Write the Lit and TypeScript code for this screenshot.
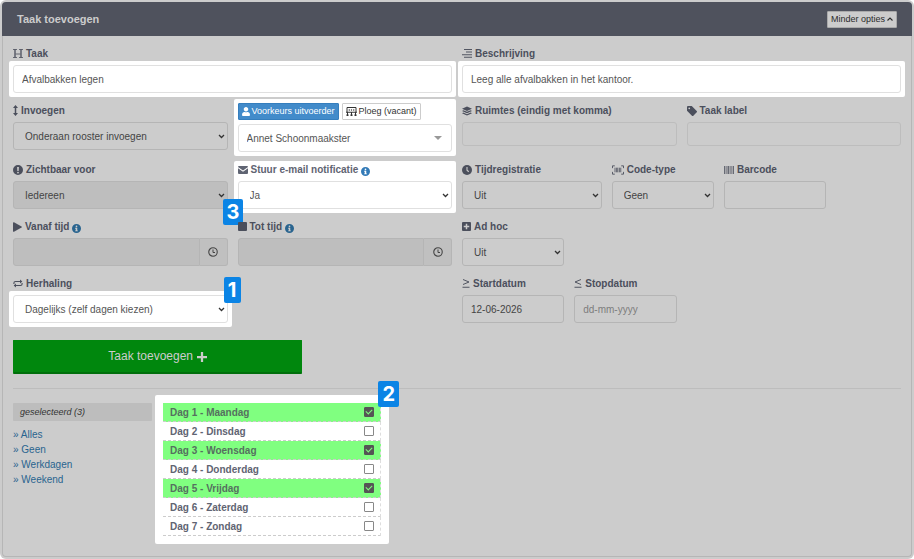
import { LitElement, html, css, svg, nothing } from "lit";
import type { TemplateResult } from "lit";
import { customElement, state } from "lit/decorators.js";
import { classMap } from "lit/directives/class-map.js";

interface Glyph {
  w: number;
  h: number;
  box: string;
  art: TemplateResult;
}

const glyph = (w: number, h: number, box: string, art: TemplateResult): Glyph => ({ w, h, box, art });

const glyphs: Record<string, Glyph> = {
  heading: glyph(10, 9, "0 0 20 18", svg`<path d="M0 1h8M0 17h8M12 1h8M12 17h8M5 10h10" fill="none" stroke="currentColor" stroke-width="1.600"/><path d="M4 1v16M16 1v16" stroke="currentColor" stroke-width="2.600"/>`),
  indent: glyph(10, 9, "0 0 20 18", svg`<path d="M4 1h16M8 6h12M0 11.500h20M4 16.500h16" fill="none" stroke="currentColor" stroke-width="1.900"/>`),
  updown: glyph(5, 11, "0 0 10 22", svg`<path d="M5 0l5 6H6.500v10H10l-5 6-5-6h3.500V6H0z" fill="currentColor"/>`),
  alert: glyph(10, 10, "0 0 20 20", svg`<path fill-rule="evenodd" fill="currentColor" d="M10 0a10 10 0 1 1 0 20 10 10 0 0 1 0-20zM8.200 4l.5 8h2.600l.5-8zM10 13.300a1.800 1.800 0 1 0 0 3.600 1.800 1.800 0 0 0 0-3.600z"/>`),
  info: glyph(9, 9, "0 0 20 20", svg`<path fill-rule="evenodd" fill="currentColor" d="M10 0a10 10 0 1 1 0 20 10 10 0 0 1 0-20zM10 3.300a1.900 1.900 0 1 0 0 3.800 1.900 1.900 0 0 0 0-3.800zM7 8.500v2h1.300v3.700H7v2h6v-2h-1.300V8.500z"/>`),
  envelope: glyph(10, 8, "0 0 20 16", svg`<path fill="currentColor" d="M2 0h16a2 2 0 0 1 2 2L10 9 0 2a2 2 0 0 1 2-2zM0 4.500l10 7 10-7V14a2 2 0 0 1-2 2H2a2 2 0 0 1-2-2z"/>`),
  clock: glyph(10, 10, "0 0 20 20", svg`<circle cx="10" cy="10" r="10" fill="currentColor"/><path d="M10 4v6.500l3.500 3" fill="none" stroke="#ccc" stroke-width="2.200"/>`),
  clockline: glyph(10, 10, "0 0 20 20", svg`<circle cx="10" cy="10" r="8.500" fill="none" stroke="currentColor" stroke-width="2.200"/><path d="M10 5v6h4" fill="none" stroke="currentColor" stroke-width="2"/>`),
  layers: glyph(10, 10, "0 0 22 20" , svg`<path fill="currentColor" d="M11 0l11 5-11 5L0 5zM3 8.200l8 3.700 8-3.700 3 1.600-11 5-11-5zM3 13.200l8 3.700 8-3.700 3 1.600-11 5-11-5z"/>`),
  tag: glyph(10, 10, "0 0 20 20", svg`<path fill-rule="evenodd" fill="currentColor" d="M0 9.500V2a2 2 0 0 1 2-2h7.500L19.400 9.900a2 2 0 0 1 0 2.800l-6.700 6.700a2 2 0 0 1-2.800 0zM4.500 2.800a1.700 1.700 0 1 0 0 3.500 1.700 1.700 0 0 0 0-3.500z"/>`),
  scan: glyph(12, 10, "0 0 26 20", svg`<path d="M6 1H1v5M20 1h5v5M6 19H1v-5M20 19h5v-5" fill="none" stroke="currentColor" stroke-width="2"/><path d="M6.500 5v10M10 5v10M12.500 5v10M16 5v10M19 5v10" stroke="currentColor" stroke-width="1.800"/>`),
  barcode: glyph(10, 8, "0 0 20 16", svg`<path d="M1 0v16M6 0v16M9 0v16M14 0v16M19 0v16" stroke="currentColor" stroke-width="1.600"/><path d="M3.500 0v16M11.500 0v16M16.500 0v16" stroke="currentColor" stroke-width=".8"/>`),
  play: glyph(9, 10, "0 0 18 20", svg`<path d="M0 1.500v17c0 1 1 1.500 2 1l15-8.400c1-.6 1-1.600 0-2.200L2 .5C1 0 0 .5 0 1.500z" fill="currentColor"/>`),
  stop: glyph(9, 9, "0 0 18 18", svg`<rect width="18" height="18" rx="2" fill="currentColor"/>`),
  plusbox: glyph(9, 9, "0 0 18 18", svg`<path fill-rule="evenodd" fill="currentColor" d="M2 0h14a2 2 0 0 1 2 2v14a2 2 0 0 1-2 2H2a2 2 0 0 1-2-2V2a2 2 0 0 1 2-2zM7.500 3.500v4h-4v3h4v4h3v-4h4v-3h-4v-4z"/>`),
  repeat: glyph(10, 9, "0 0 22 18", svg`<path d="M2 10V8a3.500 3.500 0 0 1 3.500-3.500H17M20 8v2a3.500 3.500 0 0 1-3.500 3.500H5" fill="none" stroke="currentColor" stroke-width="2.400"/><path d="M15.500 0v9l5-4.500zM6.500 9v9l-5-4.500z" fill="currentColor"/>`),
  gte: glyph(8, 9, "0 0 16 18", svg`<path d="M2 1l12 5-12 5M1 16.500h14" fill="none" stroke="currentColor" stroke-width="1.900"/>`),
  lte: glyph(8, 9, "0 0 16 18", svg`<path d="M14 1L2 6l12 5M1 16.500h14" fill="none" stroke="currentColor" stroke-width="1.900"/>`),
  user: glyph(8, 9, "0 0 448 512", svg`<path fill="currentColor" d="M224 256c70.700 0 128-57.300 128-128S294.700 0 224 0 96 57.300 96 128s57.300 128 128 128zm89.600 32h-16.700c-22.200 10.200-46.900 16-72.900 16s-50.600-5.800-72.900-16h-16.700C60.200 288 0 348.200 0 422.400V464c0 26.500 21.500 48 48 48h352c26.500 0 48-21.500 48-48v-41.600c0-74.200-60.200-134.400-134.400-134.400z"/>`),
  team: glyph(11, 9, "0 0 22 18", svg`<path d="M2 10V1h18v9M0 10.500h22" fill="none" stroke="currentColor" stroke-width="2"/><circle cx="6.500" cy="6" r="1.400" fill="currentColor"/><circle cx="11" cy="6" r="1.400" fill="currentColor"/><circle cx="15.500" cy="6" r="1.400" fill="currentColor"/><path d="M1 18v-2.500c0-2 4-2 4 0V18zM9 18v-2.500c0-2 4-2 4 0V18zM17 18v-2.500c0-2 4-2 4 0V18z" fill="currentColor"/><path d="M3 10v4M11 10v4M19 10v4" stroke="currentColor" stroke-width="2"/>`),
  plus: glyph(10, 10, "0 0 20 20", svg`<path d="M10 0v20M0 10h20" stroke="currentColor" stroke-width="4.500"/>`),
  chevron: glyph(7, 5, "0 0 14 10", svg`<path d="M2 2l5 5 5-5" fill="none" stroke="currentColor" stroke-width="2.600"/>`),
  up: glyph(6, 4, "0 0 12 8", svg`<path d="M1 7l5-5 5 5" fill="none" stroke="currentColor" stroke-width="2.200"/>`),
  caret: glyph(8, 4, "0 0 8 4", svg`<path d="M0 0h8L4 4z" fill="currentColor"/>`),
};

const icon = (name: string) => {
  const g = glyphs[name];
  return html`<svg class="icon" width=${g.w} height=${g.h} viewBox=${g.box} aria-hidden="true">${g.art}</svg>`;
};

const DAYS = ["Maandag", "Dinsdag", "Woensdag", "Donderdag", "Vrijdag", "Zaterdag", "Zondag"];

@customElement("app-root")
export class AppRoot extends LitElement {
  @state() private selected = new Set<number>([0, 2, 4]);

  static styles = css`
    :host {
      display: block;
      box-sizing: border-box;
      min-height: 100vh;
      padding: 2px;
      border-radius: 6px;
      background: #ccc;
      color: #4b4f5c;
      font: 10px/15px "Liberation Sans", Arial, sans-serif;
    }
    *, *::before, *::after { box-sizing: border-box; }
    .panel {
      border: 1px solid #b6b6b6;
      border-top: 0;
      border-radius: 4px;
      padding-bottom: 20px;
    }
    header {
      display: flex;
      align-items: center;
      justify-content: space-between;
      height: 34px;
      margin: 0 -1px;
      padding: 0 15px;
      border-radius: 4px 4px 0 0;
      background: #4f525d;
    }
    h1 { margin: 0; font-size: 11px; line-height: 15px; color: #ccc; }
    button { font: inherit; cursor: pointer; }
    .small {
      display: inline-flex;
      align-items: center;
      gap: 2px;
      height: 17px;
      padding: 0 3px;
      border: 1px solid #ccc;
      border-radius: 1px;
      background: #fff;
      color: #333;
      font-size: 9px;
      line-height: 15px;
      white-space: nowrap;
    }
    .small.dim { border-color: #aaa; background: #ccc; color: #2b2b2b; }
    .small.on { border-color: #357ebd; background: #428bca; color: #fff; }

    .body { padding: 10px 10px 0; }
    .grid {
      display: grid;
      grid-template-columns: repeat(24, minmax(0, 1fr));
      gap: 10px;
      align-items: start;
    }
    .s12 { grid-column-end: span 12; }
    .s6 { grid-column-end: span 6; }
    .s4 { grid-column-end: span 4; }
    .s3 { grid-column-end: span 3; }
    .left { grid-column-start: 1; }
    .right { grid-column-start: 13; }

    .field { position: relative; display: grid; gap: 4px; isolation: isolate; }
    .caption { display: flex; align-items: center; gap: 3px; height: 15px; font-weight: bold; white-space: nowrap; }
    .info { display: inline-flex; padding: 3px 0 0; border: 0; background: none; color: #29648f; }
    .icon { display: block; flex: none; }

    .control { position: relative; display: grid; }
    input.text, select {
      width: 100%;
      height: 28px;
      margin: 0;
      padding: 0 8px;
      border: 1px solid #b5b5b5;
      border-radius: 3px;
      background: transparent;
      color: #444;
      font: inherit;
      outline: 0;
      appearance: none;
    }
    select { padding-left: 11px; }
    select.person { padding-left: 8px; }
    input.text.low { height: 24px; border-color: #bdbdbd; }
    input::placeholder { color: #7d7d7d; opacity: 1; }
    select:disabled, input.text:disabled { background: #bebebe; opacity: 1; }
    .arrow {
      position: absolute;
      right: 3px;
      top: 0;
      bottom: 0;
      display: flex;
      align-items: center;
      color: #333;
      pointer-events: none;
    }
    .arrow.flat { right: 10px; color: #999; }
    .group { display: flex; }
    .group input.text { flex: 1; min-width: 0; border-radius: 3px 0 0 3px; }
    .group button {
      display: grid;
      place-items: center;
      width: 28px;
      padding: 0;
      border: 1px solid #b5b5b5;
      border-left: 0;
      border-radius: 0 3px 3px 0;
      background: #c0c0c0;
      color: #444;
    }

    .lit .control, .lit-all { isolation: isolate; }
    .lit .control::before, .lit-all::before {
      content: "";
      position: absolute;
      inset: -4px;
      z-index: -1;
      border-radius: 2px;
      background: #fff;
    }
    .lit-all.snug::before { top: -1px; }
    .lit select, .lit input.text, .lit-all select { border-color: #e0e0e0; color: #555; }
    .lit-all { color: #5f6472; }
    .lit-all .info { color: #337ab7; }
    .toggles { display: flex; gap: 3px; }

    .step {
      position: absolute;
      z-index: 2;
      min-width: 17px;
      height: 26px;
      padding: 0 4px;
      border-radius: 2px;
      background: #0b84e5;
      color: #fff;
      font: bold 20px/26px Inter, "Liberation Sans", sans-serif;
      text-align: center;
    }
    .step.first { right: -13px; top: 1px; padding: 0 3px; }
    .step.second { right: -18px; top: -22px; }
    .step.third { left: -15px; bottom: -16px; }

    .submit {
      grid-column: 1 / span 8;
      display: flex;
      align-items: center;
      justify-content: center;
      gap: 4px;
      height: 34px;
      margin-top: 7px;
      border: 1px solid #00870d;
      border-bottom: 2px solid #006f0b;
      border-radius: 1px;
      background: #00870d;
      color: #ccc;
      font-size: 12px;
    }
    hr { margin: 14px 0; border: 0; border-top: 1px solid #bdbdbd; }

    .schedule {
      display: grid;
      grid-template-columns: 139fr 218fr 509fr;
      gap: 11px;
      align-items: start;
    }
    .count {
      margin: 0 0 6px;
      padding: 0 7px;
      border-radius: 1px;
      background: #bdbdbd;
      color: #333;
      font-size: 9px;
      line-height: 18px;
      font-style: italic;
    }
    ul { margin: 0; padding: 0; list-style: none; }
    .links a { color: #29648f; text-decoration: none; }
    .days { position: relative; isolation: isolate; }
    .days::before {
      content: "";
      position: absolute;
      inset: -8px;
      z-index: -1;
      border-radius: 2px;
      background: #fff;
    }
    .day {
      display: flex;
      align-items: center;
      justify-content: space-between;
      height: 19px;
      padding: 0 6px 0 7px;
      border-right: 1px dashed #ddd;
      border-bottom: 1px dashed #ccc;
      color: #5f6472;
      font-weight: bold;
    }
    .day.on { background: #80ff80; color: #55705f; }
    .day label { flex: 1; }
    .day input {
      position: relative;
      width: 10px;
      height: 10px;
      margin: 0;
      border: 1px solid #888;
      border-radius: 1px;
      background: #fff;
      appearance: none;
    }
    .day input:checked { border-color: #555; background: #555; }
    .day input:checked::after {
      content: "";
      position: absolute;
      left: 2px;
      top: 0;
      width: 4px;
      height: 6px;
      border: solid #80ff80;
      border-width: 0 1px 1px 0;
      transform: rotate(45deg);
    }
  `;

  private caption(id: string, glyphName: string, text: string, info = false) {
    return html`<div class="caption">
      ${icon(glyphName)}<label for=${id}>${text}</label>${info
        ? html`<button class="info" type="button" aria-label="Info">${icon("info")}</button>`
        : nothing}
    </div>`;
  }

  private pick(id: string, value: string, disabled = false) {
    return html`<div class="control">
      <select id=${id} ?disabled=${disabled}><option>${value}</option></select>
      <span class="arrow">${icon("chevron")}</span>
    </div>`;
  }

  private text(id: string, value = "", extra = "", placeholder = "") {
    return html`<div class="control">
      <input class="text ${extra}" id=${id} type="text" .value=${value} placeholder=${placeholder} />
    </div>`;
  }

  private time(id: string) {
    return html`<div class="group">
      <input class="text" id=${id} type="text" disabled />
      <button type="button" aria-label="Kies tijd">${icon("clockline")}</button>
    </div>`;
  }

  private choose(event: Event, days: number[]) {
    event.preventDefault();
    this.selected = new Set(days);
  }

  private toggle(day: number) {
    const next = new Set(this.selected);
    if (!next.delete(day)) next.add(day);
    this.selected = next;
  }

  private links: [string, number[]][] = [
    ["Alles", [0, 1, 2, 3, 4, 5, 6]],
    ["Geen", []],
    ["Werkdagen", [0, 1, 2, 3, 4]],
    ["Weekend", [5, 6]],
  ];

  render() {
    return html`
      <section class="panel">
        <header>
          <h1>Taak toevoegen</h1>
          <button class="small dim" type="button">Minder opties ${icon("up")}</button>
        </header>
        <form class="body" @submit=${(e: Event) => e.preventDefault()}>
          <div class="grid">
            <div class="field s12 lit">${this.caption("taak", "heading", "Taak")}${this.text("taak", "Afvalbakken legen")}</div>
            <div class="field s12 lit">${this.caption("beschrijving", "indent", "Beschrijving")}${this.text("beschrijving", "Leeg alle afvalbakken in het kantoor.")}</div>

            <div class="field s6">${this.caption("invoegen", "updown", "Invoegen")}${this.pick("invoegen", "Onderaan rooster invoegen")}</div>
            <div class="field s6 lit-all">
              <div class="toggles">
                <button class="small on" type="button">${icon("user")}Voorkeurs uitvoerder</button>
                <button class="small" type="button">${icon("team")}Ploeg (vacant)</button>
              </div>
              <div class="control">
                <select class="person" aria-label="Voorkeurs uitvoerder"><option>Annet Schoonmaakster</option></select>
                <span class="arrow flat">${icon("caret")}</span>
              </div>
            </div>
            <div class="field s6">${this.caption("ruimtes", "layers", "Ruimtes (eindig met komma)")}${this.text("ruimtes", "", "low")}</div>
            <div class="field s6">${this.caption("label", "tag", "Taak label")}${this.text("label", "", "low")}</div>

            <div class="field s6">${this.caption("zichtbaar", "alert", "Zichtbaar voor")}${this.pick("zichtbaar", "Iedereen", true)}</div>
            <div class="field s6 lit-all snug">
              ${this.caption("notificatie", "envelope", "Stuur e-mail notificatie", true)}${this.pick("notificatie", "Ja")}
              <span class="step third">3</span>
            </div>
            <div class="field s4">${this.caption("registratie", "clock", "Tijdregistratie")}${this.pick("registratie", "Uit")}</div>
            <div class="field s3">${this.caption("codetype", "scan", "Code-type")}${this.pick("codetype", "Geen")}</div>
            <div class="field s3">${this.caption("barcode", "barcode", "Barcode")}${this.text("barcode")}</div>

            <div class="field s6 left">${this.caption("vanaf", "play", "Vanaf tijd", true)}${this.time("vanaf")}</div>
            <div class="field s6">${this.caption("tot", "stop", "Tot tijd", true)}${this.time("tot")}</div>
            <div class="field s3 right">${this.caption("adhoc", "plusbox", "Ad hoc")}${this.pick("adhoc", "Uit")}</div>

            <div class="field s6 left lit">
              ${this.caption("herhaling", "repeat", "Herhaling")}${this.pick("herhaling", "Dagelijks (zelf dagen kiezen)")}
              <span class="step first">1</span>
            </div>
            <div class="field s3 right">${this.caption("start", "gte", "Startdatum")}${this.text("start", "12-06-2026")}</div>
            <div class="field s3">${this.caption("stop", "lte", "Stopdatum")}${this.text("stop", "", "", "dd-mm-yyyy")}</div>

            <button class="submit" type="submit">Taak toevoegen ${icon("plus")}</button>
          </div>
          <hr />
          <div class="schedule">
            <nav>
              <p class="count">geselecteerd (${this.selected.size})</p>
              <ul class="links">
                ${this.links.map(([name, days]) => html`<li><a href="#" @click=${(e: Event) => this.choose(e, days)}>» ${name}</a></li>`)}
              </ul>
            </nav>
            <div class="days">
              <ul>
                ${DAYS.map((name, i) => html`<li class=${classMap({ day: true, on: this.selected.has(i) })}>
                  <label for="day-${i}">Dag ${i + 1} - ${name}</label>
                  <input id="day-${i}" type="checkbox" .checked=${this.selected.has(i)} @change=${() => this.toggle(i)} />
                </li>`)}
              </ul>
              <span class="step second">2</span>
            </div>
          </div>
        </form>
      </section>
    `;
  }
}
